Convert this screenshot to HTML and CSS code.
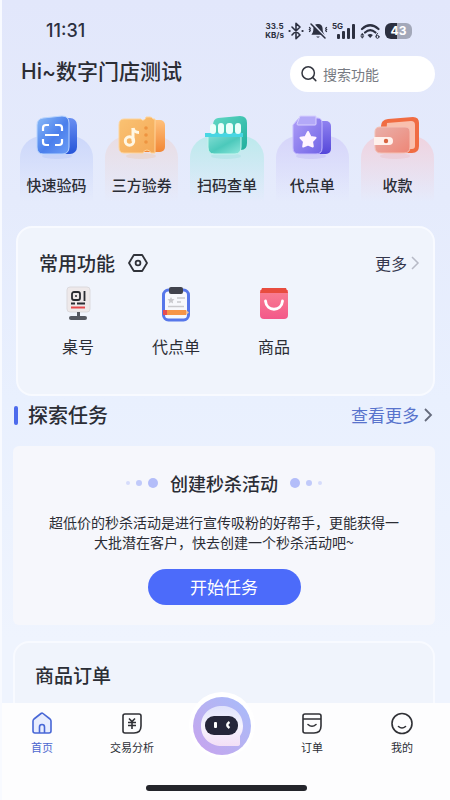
FILE: index.html
```html
<!DOCTYPE html>
<html lang="zh-CN">
<head>
<meta charset="utf-8">
<meta name="viewport" content="width=device-width, initial-scale=1">
<title>数字门店</title>
<link rel="stylesheet" href="styles.css">
</head>
<body>
<div class="app">
  <div class="status">
    <span class="time">11:31</span>
    <div class="signals">
      <span class="speed"><span>33.5</span><span>KB/s</span></span>
      <svg width="16" height="18" viewBox="0 0 16 18" fill="none" stroke="#2c3040" stroke-width="1.6" stroke-linejoin="round" stroke-linecap="round"><path d="M4 5l8 8-4 3.600V1.400L12 5l-8 8"/><path d="M1.500 9h.1M14.500 9h.1" stroke-width="2.200"/></svg>
      <svg width="20" height="18" viewBox="0 0 20 18" fill="none" stroke="#2c3040" stroke-linecap="round"><path d="M10 2c-3 0-4.600 2-4.600 4.600 0 3.400-.8 4.600-2 6.200h13.200c-1.200-1.600-2-2.800-2-6.200C14.600 4 13 2 10 2z" fill="#2c3040" stroke="none"/><path d="M8.200 14.500a2 2 0 003.600 0z" fill="#2c3040" stroke="none"/><path d="M4 1l14 15" stroke="#e3e8fb" stroke-width="2"/><path d="M3 2l14 14" stroke-width="1.500"/><path d="M1.500 5.500q1.500 1 0 2 1.500 1 0 2M18.500 5.500q-1.500 1 0 2-1.500 1 0 2" stroke-width="1.300"/></svg>
      <span class="cell"><span class="gen">5G</span><svg width="19" height="15" viewBox="0 0 19 15" fill="#2c3040"><rect y="10" width="3" height="5" rx="1"/><rect x="5" y="7" width="3" height="8" rx="1"/><rect x="10" y="4" width="3" height="11" rx="1"/><rect x="15" width="3" height="15" rx="1"/></svg></span>
      <svg width="21" height="17" viewBox="0 0 21 17" fill="none" stroke="#2c3040" stroke-linecap="round"><path d="M2 6q8-7.500 16.500 0" stroke-width="2.200"/><path d="M5 9.500q5.200-4.600 10.500 0" stroke-width="2.200"/><path d="M7.500 12q2.700-2 5.400 0l-2.700 3z" fill="#2c3040" stroke="none"/><path d="M1 12l1.300-1.800L3.600 12zM1 13.500l1.300 1.800 1.300-1.800z" fill="#2c3040" stroke-width=".6"/><circle cx="17.500" cy="13.800" r="1.500" stroke-width="1"/><path d="M16 13.500q0-2.500 1.700-3.200" stroke-width="1"/></svg>
      <span class="battery">43</span>
    </div>
  </div>

  <header class="top">
    <h1 class="greeting">Hi~数字门店测试</h1>
    <label class="search">
      <svg width="18" height="18" viewBox="0 0 18 18" fill="none" stroke="#33363f" stroke-width="1.500" stroke-linecap="round"><circle cx="8.200" cy="8" r="6.200"/><path d="M12.800 12.600l3 3"/></svg>
      <input type="search" placeholder="搜索功能" aria-label="搜索功能">
    </label>
  </header>

  <main class="content">
    <nav class="quick" aria-label="快捷入口">
      <a class="tile blue" href="#">
        <svg width="44" height="46" viewBox="0 0 44 46"><defs><linearGradient id="b1" x1="0" y1="0" x2="1" y2="1"><stop offset="0" stop-color="#8bbcf8"/><stop offset=".55" stop-color="#4b7fec"/><stop offset="1" stop-color="#6c9df6"/></linearGradient><linearGradient id="b2" x1="0" y1="0" x2="0" y2="1"><stop offset="0" stop-color="#6a8ff2"/><stop offset="1" stop-color="#2554d8"/></linearGradient></defs><ellipse cx="22" cy="42" rx="15" ry="3" fill="#9fb6f5" opacity=".25"/><rect x="14" y="4" width="28" height="36" rx="7" fill="url(#b2)"/><path d="M8 4l19-2q7 0 7 7v24q0 7-7 7H8q-6 0-6-7V11q0-6 6-7z" fill="url(#b1)" stroke="#b9d5ff"/><path d="M8 17v-3q0-3 3-3h3M20 11h4q3 0 3 3v3M8 25v3q0 3 3 3h3M20 31h4q3 0 3-3v-3M10 21h14" fill="none" stroke="#fff" stroke-width="2.200"/></svg>
        <span>快速验码</span>
      </a>
      <a class="tile orange" href="#">
        <svg width="48" height="46" viewBox="0 0 48 46"><defs><linearGradient id="o1" x1="0" y1="0" x2="1" y2="1"><stop offset="0" stop-color="#fac374"/><stop offset="1" stop-color="#f4a856"/></linearGradient><linearGradient id="o2" x1="0" y1="0" x2="0" y2="1"><stop offset="0" stop-color="#ffc17c"/><stop offset="1" stop-color="#f28736"/></linearGradient></defs><ellipse cx="23" cy="42" rx="15" ry="3" fill="#edbd91" opacity=".25"/><rect x="21" y="6" width="26" height="32" rx="5" fill="url(#o2)"/><path d="M6 5h17q1 2 3 1t2-3h4q2 0 3 2h2v34h-4q-1-3-4-3t-4 3H6q-5 0-5-6V11q0-6 5-6z" fill="url(#o1)" stroke="#ffd59c"/><path d="M15 14v13.500" stroke="#fff7e4" stroke-width="3" fill="none"/><circle cx="11.500" cy="27" r="4.200" fill="none" stroke="#fff7e4" stroke-width="3"/><path d="M15 14q1 4.500 6 4.500" fill="none" stroke="#fff7e4" stroke-width="3"/><g fill="#ee9440"><circle cx="28" cy="14" r="1.800"/><circle cx="28" cy="21" r="1.800"/><circle cx="28" cy="28" r="1.800"/></g></svg>
        <span>三方验券</span>
      </a>
      <a class="tile green" href="#">
        <svg width="46" height="46" viewBox="0 0 46 46"><defs><linearGradient id="g1" x1="0" y1="0" x2="1" y2="1"><stop offset="0" stop-color="#7fdcd2"/><stop offset=".5" stop-color="#4cc9bb"/><stop offset="1" stop-color="#8fe6dc"/></linearGradient><linearGradient id="g2" x1="0" y1="0" x2="1" y2="1"><stop offset="0" stop-color="#61d8c4"/><stop offset="1" stop-color="#1fae9d"/></linearGradient></defs><ellipse cx="22" cy="42" rx="15" ry="3" fill="#88dcd7" opacity=".25"/><path d="M14 4l22-2q7 0 7 7v20q0 7-6 7H9V11q0-6 5-7z" fill="url(#g2)"/><path d="M4 22h33v11q0 7-6 7H10q-6 0-6-7z" fill="url(#g1)" stroke="#c2f5ed"/><path d="M1 19h38v4H1z" fill="#48d6e3"/><g fill="#eafffa"><rect x="6" y="10" width="6" height="10" rx="3"/><rect x="14" y="9" width="6" height="11" rx="3"/><rect x="22" y="9" width="7" height="11" rx="3"/><rect x="31" y="9" width="6" height="11" rx="3"/></g></svg>
        <span>扫码查单</span>
      </a>
      <a class="tile purple" href="#">
        <svg width="44" height="46" viewBox="0 0 44 46"><defs><linearGradient id="p1" x1="0" y1="0" x2="1" y2="1"><stop offset="0" stop-color="#ad9df7"/><stop offset="1" stop-color="#7164e6"/></linearGradient><linearGradient id="p2" x1="0" y1="0" x2="0" y2="1"><stop offset="0" stop-color="#8f82f0"/><stop offset="1" stop-color="#5547d9"/></linearGradient></defs><ellipse cx="21" cy="42" rx="15" ry="3" fill="#a89af0" opacity=".25"/><rect x="16" y="7" width="25" height="33" rx="5" fill="url(#p2)"/><path d="M9 4h18q5 0 5 5v25q0 6-6 6H9q-6 0-6-6V11z" fill="url(#p1)" stroke="#c5bbff"/><path d="M10 2h16v8q0 1-1 1H8q-1 0-1-1z" fill="#b3a9f8" stroke="#d7d0ff"/><path d="M18 18l2.500 5 5 .8-3.500 3.700.8 5-4.800-2-4.800 2 .8-5-3.500-3.700 5-.8z" fill="#fff4ff" stroke="#fff4ff" stroke-width="2" stroke-linejoin="round"/></svg>
        <span>代点单</span>
      </a>
      <a class="tile red" href="#">
        <svg width="48" height="46" viewBox="0 0 48 46"><defs><linearGradient id="r1" x1="0" y1="0" x2="1" y2="1"><stop offset="0" stop-color="#e9b0aa"/><stop offset="1" stop-color="#ee8676"/></linearGradient></defs><ellipse cx="22" cy="42" rx="15" ry="3" fill="#edacaf" opacity=".25"/><path d="M15 5l25-2q6 0 6 6v23q0 7-7 7H8V12q0-6 7-7z" fill="#f06c42"/><path d="M14 9l24-2q4 0 4 4v21q0 3-3 3H12z" fill="#f9c0ae"/><path d="M7 13h25q5 0 5 5v15q0 6-6 6H8q-6 0-6-6V18q0-5 5-5z" fill="url(#r1)" stroke="#f4c0b4"/><path d="M1 23h15a4 4 0 010 8H1z" fill="#fff1ec"/><circle cx="13" cy="27" r="2.200" fill="#d9643f"/></svg>
        <span>收款</span>
      </a>
    </nav>

    <section class="panel common">
      <div class="panel-head">
        <h2>常用功能</h2>
        <button class="icon-button" type="button" aria-label="设置"><svg width="20" height="20" viewBox="0 0 20 20" fill="none" stroke="#303239" stroke-width="1.800" stroke-linejoin="round"><path d="M5.800 2h8.400L19 10l-4.800 8H5.800L1 10z"/><circle cx="10" cy="10" r="2.400"/></svg></button>
        <a class="more" href="#">更多<svg width="10" height="16" viewBox="0 0 10 16" fill="none" stroke="#b7bac6" stroke-width="1.500"><path d="M2 2l6 6-6 6"/></svg></a>
      </div>
      <div class="functions">
        <a href="#"><svg width="30" height="36" viewBox="0 0 30 36"><rect x="4" y="1" width="23" height="25" rx="3" fill="#eee9ea" stroke="#dcdadd"/><path d="M14 26h3v5h-3z" fill="#555860"/><rect x="6" y="30" width="18" height="4" rx="2" fill="#555860"/><g fill="none" stroke="#292b31" stroke-width="1.800"><rect x="9" y="6" width="8" height="8" rx="2"/><path d="M21.500 5v10M8 17.500h4M14 17.500h8"/></g><circle cx="13" cy="10" r="1" fill="#292b31"/><path d="M8 21.500h14" stroke="#e5484c" stroke-width="2"/></svg><span>桌号</span></a>
        <a href="#"><svg width="30" height="36" viewBox="0 0 30 36"><rect x="2.500" y="4" width="25" height="30" rx="5" fill="#f7f8fc" stroke="#5777ea" stroke-width="3"/><rect x="8" y="1" width="14" height="7" rx="2" fill="#41434d"/><path d="M10 11l1 2 2.500.3-1.800 1.700.4 2.500-2.100-1.200L7.900 17.500l.4-2.500-1.800-1.700L9 13z" fill="#c9c9cd"/><path d="M16 12h8M16 16h4M7 20.500h16" stroke="#c9c9cd" stroke-width="1.500"/><path d="M5 24h20v5H5z" fill="#f79547"/><path d="M25 24l3 2.500-3 2.500z" fill="#f5c095"/><path d="M2 24h4v5H2z" fill="#e74e50"/></svg><span>代点单</span></a>
        <a href="#"><svg width="30" height="36" viewBox="0 0 30 36"><defs><linearGradient id="bag" x1="0" y1="0" x2="0" y2="1"><stop offset="0" stop-color="#f98092"/><stop offset="1" stop-color="#f3588a"/></linearGradient></defs><path d="M1 4h28v25q0 4-4 4H5q-4 0-4-4z" fill="url(#bag)"/><path d="M3 2h24l2 5H1z" fill="#e84c3e"/><path d="M6.500 15c1 11 16 11 17 0" fill="none" stroke="#fff" stroke-width="2.800" stroke-linecap="round"/></svg><span>商品</span></a>
      </div>
    </section>

    <section class="tasks">
      <div class="section-head">
        <h2>探索任务</h2>
        <a href="#">查看更多<svg width="10" height="16" viewBox="0 0 10 16" fill="none" stroke="#656b7c" stroke-width="1.800"><path d="M2 2l6 6-6 6"/></svg></a>
      </div>
      <article class="task">
        <h3><span class="dots"><i></i><i></i><i></i></span>创建秒杀活动<span class="dots flip"><i></i><i></i><i></i></span></h3>
        <p>超低价的秒杀活动是进行宣传吸粉的好帮手，更能获得一大批潜在客户，快去创建一个秒杀活动吧~</p>
        <button class="start" type="button">开始任务</button>
      </article>
    </section>

    <section class="panel orders"><h2>商品订单</h2></section>
  </main>

  <footer class="bottom">
    <nav class="tabs" aria-label="主导航">
      <a class="active" href="#"><svg width="22" height="24" viewBox="0 0 22 24" fill="none" stroke="#4867d6" stroke-width="1.600" stroke-linejoin="round"><path d="M2 10q0-1 1-2l7-5.500q1-.8 2 0L19 8q1 1 1 2v10q0 2-2 2H4q-2 0-2-2z" fill="#e8edfe"/><path d="M8.500 22v-6q0-2.500 2.500-2.500t2.500 2.500v6"/></svg><span>首页</span></a>
      <a href="#"><svg width="22" height="24" viewBox="0 0 22 24" fill="none" stroke="#303136" stroke-width="1.600"><path d="M4 3h14q2 0 2 2v10q0 7-7 7H4q-2 0-2-2V5q0-2 2-2z"/><path d="M8 7.500l3 3 3-3M7 11.500h8M7 14.500h8M11 11v7"/></svg><span>交易分析</span></a>
      <a class="orb" href="#" aria-label="智能助手">
        <svg width="66" height="66" viewBox="0 0 66 66"><defs><linearGradient id="ring" x1="0" y1="1" x2="1" y2="0"><stop offset="0" stop-color="#c9a2ee"/><stop offset=".5" stop-color="#b7b2f2"/><stop offset="1" stop-color="#a7bcfb"/></linearGradient><linearGradient id="head" x1="0" y1="0" x2="0" y2="1"><stop offset="0" stop-color="#dfe2fb"/><stop offset=".5" stop-color="#f6f4fe"/><stop offset="1" stop-color="#f3dff6"/></linearGradient></defs><circle cx="33" cy="33" r="33" fill="#fff"/><circle cx="33" cy="34" r="29" fill="url(#ring)"/><path d="M33 14c12 0 21 8 21 20 0 4-1 7-3 10v8q0 2-3 2H33C21 54 12 46 12 34s9-20 21-20z" fill="url(#head)"/><rect x="16" y="24" width="33" height="19" rx="9" fill="#25263a"/><rect x="25" y="30" width="3" height="6" rx="1" fill="#fff"/><path d="M40.500 30q-4.500 3 0 6" fill="none" stroke="#fff" stroke-width="2.500"/></svg>
      </a>
      <a href="#"><svg width="22" height="24" viewBox="0 0 22 24" fill="none" stroke="#303136" stroke-width="1.600" stroke-linecap="round"><path d="M4 3h14q2 0 2 2v10q0 7-7 7H4q-2 0-2-2V5q0-2 2-2zM2 8h18"/><path d="M7 13.500q4 3.500 8 0"/></svg><span>订单</span></a>
      <a href="#"><svg width="22" height="24" viewBox="0 0 22 24" fill="none" stroke="#303136" stroke-width="1.600" stroke-linecap="round"><circle cx="11" cy="12.500" r="10"/><path d="M7.500 15.500q3.500 3 7 0"/></svg><span>我的</span></a>
    </nav>
    <div class="home-bar"></div>
  </footer>
</div>
</body>
</html>
```

FILE: styles.css
```css
* { box-sizing: border-box; }

body {
  margin: 0;
  background: #fff;
  color: #2b2d35;
  font-family: "Noto Sans CJK SC", sans-serif;
}

h1, h2, h3, p { margin: 0; font-weight: 500; }
a { color: inherit; text-decoration: none; }
svg { display: block; flex: none; }
button { font: inherit; border: 0; padding: 0; cursor: pointer; }

.app {
  display: flex;
  flex-direction: column;
  height: 100vh;
  border-left: 2px solid #f8faff;
  background: linear-gradient(#e2e7fb, #e5ebfc 25%, #e9f0fe 50%, #eff4fe 80%);
}

.status {
  display: flex;
  align-items: center;
  justify-content: space-between;
  padding: 18px 38px 0 44px;
  height: 44px;
  color: #2c3040;
}
.time { font: 500 18px/24px Inter, sans-serif; }
.signals { display: flex; align-items: center; gap: 4px; }
.speed {
  display: flex;
  flex-direction: column;
  font: 700 8px/9px Inter, sans-serif;
  text-align: center;
}
.cell { display: flex; align-items: flex-end; }
.gen { align-self: flex-start; margin: -2px -6px 0 0; font: 700 8px/9px Inter, sans-serif; }
.battery {
  width: 27px;
  height: 16px;
  border-radius: 6px;
  background: linear-gradient(90deg, #2c3040 45%, #a3a8b9 45%);
  color: #fff;
  font: 700 12px/16px Inter, sans-serif;
  text-align: center;
}

.top {
  display: flex;
  align-items: center;
  justify-content: space-between;
  padding: 0 15px 0 19px;
  height: 60px;
}
.greeting {
  padding-bottom: 5px;
  font-family: Inter, "Noto Sans CJK SC", sans-serif;
  font-size: 21px;
  line-height: 30px;
}
.search {
  display: flex;
  align-items: center;
  gap: 5px;
  width: 145px;
  height: 36px;
  padding: 0 10px;
  border-radius: 18px;
  background: #fff;
}
.search input {
  flex: 1;
  min-width: 0;
  border: 0;
  padding: 0;
  outline: 0;
  background: none;
  font: 14px/20px "Noto Sans CJK SC", sans-serif;
}
.search input::placeholder { color: #777a82; opacity: 1; }

.content { flex: 1; min-height: 0; overflow: hidden; padding: 10px 15px 0 11px; }

.quick {
  display: grid;
  grid-template-columns: repeat(5, 1fr);
  gap: 12px;
  padding: 0 1px 0 7px;
}
.tile {
  display: flex;
  flex-direction: column;
  align-items: center;
  height: 88px;
  font-size: 15px;
  font-weight: 500;
  line-height: 22px;
  white-space: nowrap;
}
.tile::before {
  content: "";
  align-self: stretch;
  height: 66px;
  margin: 22px 0 -88px;
  border-radius: 22px 22px 0 0;
}
.tile svg { position: relative; }
.tile span { position: relative; margin-top: 14px; }
.blue::before { background: linear-gradient(#ccd7fa, #ccd7fa00); }
.orange::before { background: linear-gradient(#e9dde4, #e9dde400); }
.green::before { background: linear-gradient(#bce9ec, #bce9ec00); }
.purple::before { background: linear-gradient(#d6d5fa, #d6d5fa00); }
.red::before { background: linear-gradient(#efd3df, #efd3df00); }

.panel {
  border: 2px solid #f8faff;
  border-radius: 16px;
  background: #f0f4fc;
}
.common { height: 170px; margin: 24px 0 0 3px; padding: 22px 13px 0 21px; }
.panel h2 { font-size: 19px; line-height: 26px; }
.panel-head { display: flex; align-items: center; }
.icon-button { margin-left: 13px; background: none; }
.more {
  display: flex;
  align-items: center;
  gap: 3px;
  margin-left: auto;
  font-size: 16px;
  line-height: 24px;
  color: #34364c;
}
.functions { display: grid; grid-template-columns: repeat(4, 98px); margin: 10px 0 0 -10px; }
.functions a {
  display: flex;
  flex-direction: column;
  align-items: center;
  gap: 12px;
  font-size: 16px;
  line-height: 24px;
}

.section-head {
  display: flex;
  align-items: center;
  justify-content: space-between;
  height: 38px;
  padding: 0 2px 0 1px;
}
.section-head h2 { display: flex; align-items: center; gap: 10px; font-size: 20px; line-height: 28px; }
.section-head h2::before { content: ""; width: 4px; height: 19px; border-radius: 2px; background: #4d6bec; }
.section-head a { display: flex; align-items: center; gap: 4px; font-size: 17px; line-height: 24px; color: #5873cc; }

.task {
  display: flex;
  flex-direction: column;
  align-items: center;
  margin-top: 12px;
  height: 179px;
  padding-top: 24px;
  border-radius: 6px;
  background: #f6f7fc;
}
.task h3 { display: flex; align-items: center; gap: 12px; font-size: 18px; line-height: 26px; }
.task p {
  width: 358px;
  margin-top: 16px;
  font-size: 14px;
  font-weight: 400;
  line-height: 20px;
  text-align: center;
}
.dots { display: flex; align-items: center; gap: 6px; }
.dots i { width: 10px; height: 10px; border-radius: 50%; background: #b3bdf9; }
.dots i:nth-child(2) { width: 6px; height: 6px; background: #c1cafa; }
.dots i:first-child { width: 4px; height: 4px; background: #d6dcfb; }
.flip { flex-direction: row-reverse; }
.start {
  width: 153px;
  height: 36px;
  margin-top: 17px;
  border-radius: 18px;
  background: #4c6bfa;
  color: #fff;
  font-size: 17px;
  line-height: 36px;
}
.orders { margin-top: 16px; height: 120px; padding: 19px 20px; }

.bottom { position: relative; background: #fdfdfe; padding-bottom: 9px; }
.tabs { display: flex; justify-content: space-between; height: 73px; padding: 8px 8px 0 0; }
.tabs a {
  display: flex;
  flex: 0 0 80px;
  flex-direction: column;
  align-items: center;
  gap: 4px;
  font-size: 11px;
  line-height: 16px;
}
.tabs .active { color: #4b67cf; }
.tabs .orb { margin-top: -19px; }
.home-bar { width: 161px; height: 6px; margin: 9px auto 0; border-radius: 3px; background: #24252b; }
```
